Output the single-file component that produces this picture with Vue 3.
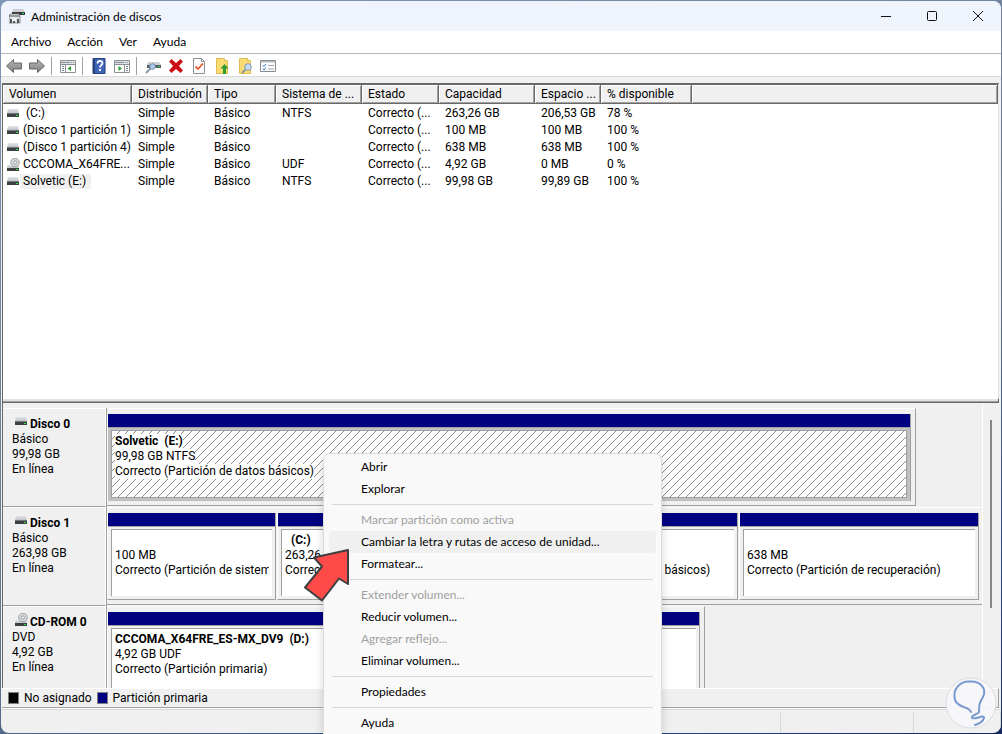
<script setup>
const menus = ['Archivo', 'Acción', 'Ver', 'Ayuda']

const tools = [
  { id: 'back', label: 'Atrás' },
  { id: 'forward', label: 'Adelante' },
  { id: 'sep' },
  { id: 'tree', label: 'Mostrar u ocultar árbol' },
  { id: 'sep' },
  { id: 'help', label: 'Ayuda' },
  { id: 'panel', label: 'Mostrar panel de acciones' },
  { id: 'sep' },
  { id: 'rescan', label: 'Examinar discos' },
  { id: 'delete', label: 'Eliminar' },
  { id: 'check', label: 'Comprobar' },
  { id: 'up', label: 'Abrir carpeta' },
  { id: 'search', label: 'Explorar carpeta' },
  { id: 'props', label: 'Propiedades' }
]

const columns = ['Volumen', 'Distribución', 'Tipo', 'Sistema de ...', 'Estado', 'Capacidad', 'Espacio ...', '% disponible', '']

const volumes = [
  { name: '\u00a0(C:)', fs: 'NTFS', cap: '263,26 GB', free: '206,53 GB', pct: '78 %' },
  { name: '(Disco 1 partición 1)', fs: '', cap: '100 MB', free: '100 MB', pct: '100 %' },
  { name: '(Disco 1 partición 4)', fs: '', cap: '638 MB', free: '638 MB', pct: '100 %' },
  { name: 'CCCOMA_X64FRE...', fs: 'UDF', cap: '4,92 GB', free: '0 MB', pct: '0 %', cd: true },
  { name: 'Solvetic (E:)', fs: 'NTFS', cap: '99,98 GB', free: '99,89 GB', pct: '100 %', selected: true }
]

const disks = [
  {
    name: 'Disco 0', kind: 'Básico', size: '99,98 GB', width: 92.5,
    parts: [{ title: 'Solvetic\u00a0 (E:)', size: '99,98 GB NTFS', status: 'Correcto (Partición de datos básicos)', share: 1, selected: true }]
  },
  {
    name: 'Disco 1', kind: 'Básico', size: '263,98 GB', width: 100,
    parts: [
      { title: '', size: '100 MB', status: 'Correcto (Partición de sistema EFI)', share: 167 },
      { title: '\u00a0 (C:)', size: '263,26 GB NTFS', status: 'Correcto (Arranque, Archivo de paginación, Volcado, Partición de datos básicos)', share: 459 },
      { title: '', size: '638 MB', status: 'Correcto (Partición de recuperación)', share: 238 }
    ]
  },
  {
    name: 'CD-ROM 0', kind: 'DVD', size: '4,92 GB', width: 68.3, cd: true,
    parts: [{ title: 'CCCOMA_X64FRE_ES-MX_DV9\u00a0 (D:)', size: '4,92 GB UDF', status: 'Correcto (Partición primaria)', share: 1 }]
  }
]

const actions = [
  { text: 'Abrir' },
  { text: 'Explorar' },
  { sep: true },
  { text: 'Marcar partición como activa', disabled: true },
  { text: 'Cambiar la letra y rutas de acceso de unidad...', hot: true },
  { text: 'Formatear...' },
  { sep: true },
  { text: 'Extender volumen...', disabled: true },
  { text: 'Reducir volumen...' },
  { text: 'Agregar reflejo...', disabled: true },
  { text: 'Eliminar volumen...' },
  { sep: true },
  { text: 'Propiedades' },
  { sep: true },
  { text: 'Ayuda' }
]
</script>

<template>
  <div class="desktop">
    <svg class="defs" width="0" height="0" aria-hidden="true">
      <defs>
        <linearGradient id="metal" x1="0" y1="0" x2="0" y2="1">
          <stop offset="0" stop-color="#e2e4e7" /><stop offset="1" stop-color="#bfc3c8" />
        </linearGradient>
        <linearGradient id="grayArrow" x1="0" y1="0" x2="0" y2="1">
          <stop offset="0" stop-color="#b9b9b9" /><stop offset="1" stop-color="#7d7d7d" />
        </linearGradient>
        <pattern id="hatch" width="8" height="8" patternUnits="userSpaceOnUse">
          <path d="M0 7h1v1H0zM1 6h1v1H1zM2 5h1v1H2zM3 4h1v1H3zM4 3h1v1H4zM5 2h1v1H5zM6 1h1v1H6zM7 0h1v1H7z" fill="#8c8c8c" />
        </pattern>
        <symbol id="drive" viewBox="0 0 14 14">
          <path d="M2 2h10l1 4H1z" fill="url(#metal)" />
          <path d="M1 6h12v4H1z" fill="#3c4043" />
          <path d="M1 6h12v1H1z" fill="#73777a" />
          <path d="M10 8h2v1h-2z" fill="#2ee84a" />
        </symbol>
        <symbol id="cd" viewBox="0 0 14 14">
          <path d="M1.500 7h11l.5 3H1z" fill="url(#metal)" />
          <path d="M1 10h12v3H1z" fill="#3c4043" />
          <path d="M10 11h2v1h-2z" fill="#2ee84a" />
          <circle cx="9" cy="4.500" r="4.300" fill="#d4d6d8" stroke="#909396" stroke-width=".8" />
          <circle cx="9" cy="4.500" r="1.500" fill="#fff" stroke="#8c8f92" stroke-width=".8" />
        </symbol>
      </defs>
    </svg>

    <main class="window">
      <header class="titlebar">
        <svg class="appicon" viewBox="0 0 16 16" aria-hidden="true">
          <path d="M4 1h10l2 3H3z" fill="#cfd2d5" />
          <path d="M3 4h13v3H3z" fill="#35393c" />
          <path d="M13 5h2v1h-2z" fill="#35e04e" />
          <path d="M1 6h9l1 3v6H0V9z" fill="#e3e3e3" stroke="#77797b" stroke-width=".8" />
          <path d="M0 8h11" stroke="#55585a" />
          <path d="M1 11h2v4H1zM4 11h2v4H4zM8 11h2v4H8z" fill="#55585a" />
          <path d="M3 10h4v3H3z" fill="#f3f3f3" />
        </svg>
        <h1>Administración de discos</h1>
        <button class="sys" aria-label="Minimizar"><svg viewBox="0 0 12 12"><path d="M1 6.500h10" /></svg></button>
        <button class="sys" aria-label="Maximizar"><svg viewBox="0 0 12 12"><rect x="1.500" y="1.500" width="9" height="9" rx="1" /></svg></button>
        <button class="sys" aria-label="Cerrar"><svg viewBox="0 0 12 12"><path d="M1 1l10 10M11 1L1 11" /></svg></button>
      </header>

      <nav class="menubar">
        <button v-for="m in menus" :key="m">{{ m }}</button>
      </nav>

      <div class="toolbar" role="toolbar">
        <template v-for="(t, i) in tools" :key="i">
          <span v-if="t.id === 'sep'" class="tsep"></span>
          <button v-else class="tool" :aria-label="t.label">
            <svg viewBox="0 0 16 16">
              <path v-if="t.id === 'back'" d="M.5 8L7.500 1.500v3.500h8v6h-8v3.500z" fill="url(#grayArrow)" stroke="#666" />
              <path v-else-if="t.id === 'forward'" d="M15.500 8L8.500 1.500v3.500h-8v6h8v3.500z" fill="url(#grayArrow)" stroke="#666" />
              <g v-else-if="t.id === 'tree' || t.id === 'panel'">
                <path d="M.5 2.500h15v12H.5z" fill="#fff" stroke="#8a8f94" />
                <path d="M1 3h14v3H1z" fill="#dfe2e6" />
                <path d="M1 4.500h9M11 4.500h1M13 4.500h1M1 6.500h14" stroke="#8a8f94" />
                <g v-if="t.id === 'tree'">
                  <path d="M5.500 7v7" stroke="#8a8f94" />
                  <path d="M2 8.500h2M2 10.500h2M2 12.500h2" stroke="#6b7f96" />
                  <path d="M11 8v5L7.500 10.500z" fill="#27a22d" />
                </g>
                <g v-else>
                  <path d="M10.500 7v7" stroke="#8a8f94" />
                  <path d="M12 8.500h2M12 10.500h2M12 12.500h2" stroke="#6b7f96" />
                  <path d="M4.500 8v5L8 10.500z" fill="#27a22d" />
                </g>
              </g>
              <g v-else-if="t.id === 'help'">
                <path d="M2 .5h12v15H2z" fill="#3f63b5" stroke="#27407f" />
                <path d="M2 1h2v14H2z" fill="#27407f" />
                <path d="M6.500 5.500c0-3.300 5-3.300 5-.3 0 2-2.500 2-2.500 4.300" fill="none" stroke="#fff" stroke-width="1.800" />
                <path d="M8 11h2v2H8z" fill="#fff" />
              </g>
              <g v-else-if="t.id === 'rescan'">
                <path d="M3 4h11l2 3H2z" fill="#cdd0d3" />
                <path d="M2 7h14v3H2z" fill="#555b60" />
                <path d="M13 8h2v1h-2z" fill="#2fdc48" />
                <path d="M6 10L1 15" stroke="#8494a5" stroke-width="1.800" />
                <circle cx="7.500" cy="8.500" r="2.800" fill="#a9cbe8" stroke="#6e8ba5" />
              </g>
              <path v-else-if="t.id === 'delete'" d="M1 3.500L3.500 1 8 5l4.500-4L15 3.500 11 8l4 4.500-2.500 2.500L8 11l-4.500 4L1 12.500 5 8z" fill="#c90f16" />
              <g v-else-if="t.id === 'check'">
                <path d="M2.500.5h8l3 3v12h-11z" fill="#fdfdfd" stroke="#8d9196" />
                <path d="M10.500.5v3h3" fill="none" stroke="#8d9196" />
                <path d="M4.500 8.500l2.500 2.500 5-5.500" fill="none" stroke="#e8592a" stroke-width="1.800" />
              </g>
              <g v-else-if="t.id === 'up'">
                <path d="M2.500.5h8v2h3v13h-11z" fill="#fbdc72" stroke="#dfbc55" />
                <path d="M10.500 6l4 4.500H12V16H9v-5.500H6.500z" fill="#2e9a32" />
              </g>
              <g v-else-if="t.id === 'search'">
                <path d="M2.500.5h8v2h3v13h-11z" fill="#fbdc72" stroke="#dfbc55" />
                <path d="M8.500 11.500L5 15" stroke="#8494a5" stroke-width="1.800" />
                <circle cx="11" cy="9" r="3.300" fill="#c3dcf1" stroke="#7f9bb5" />
              </g>
              <g v-else>
                <path d="M.5 2.500h15v11H.5z" fill="#fff" stroke="#858b91" />
                <path d="M1 3h14v1.500H1z" fill="#b8bdc2" />
                <path d="M8 7.500h6M8 11h6" stroke="#9aa0a6" />
                <path d="M2.500 7l1.500 1.500L6 6M2.500 10.500L4 12l2-2.500" fill="none" stroke="#2f77c4" />
              </g>
            </svg>
          </button>
        </template>
      </div>

      <section class="list">
        <table>
          <colgroup>
            <col class="w1"><col class="w2"><col class="w3"><col class="w4"><col class="w5"><col class="w6"><col class="w7"><col class="w8"><col>
          </colgroup>
          <thead>
            <tr><th v-for="(c, i) in columns" :key="i" scope="col">{{ c }}</th></tr>
          </thead>
          <tbody>
            <tr v-for="v in volumes" :key="v.name">
              <td class="vol">
                <svg class="mini"><use :href="v.cd ? '#cd' : '#drive'" /></svg><span :class="{ picked: v.selected }">{{ v.name }}</span>
              </td>
              <td>Simple</td>
              <td>Básico</td>
              <td>{{ v.fs }}</td>
              <td>Correcto (...</td>
              <td>{{ v.cap }}</td>
              <td>{{ v.free }}</td>
              <td>{{ v.pct }}</td>
              <td></td>
            </tr>
          </tbody>
        </table>
      </section>

      <section class="graph">
        <div class="rows">
          <article v-for="d in disks" :key="d.name" class="disk">
            <div class="label">
              <h2><svg class="mini"><use :href="d.cd ? '#cd' : '#drive'" /></svg>{{ d.name }}</h2>
              <p>{{ d.kind }}</p>
              <p>{{ d.size }}</p>
              <p>En línea</p>
            </div>
            <div class="track">
              <div class="parts" :class="{ framed: d.width < 100 }" :style="{ width: d.width + '%' }">
                <div v-for="(p, i) in d.parts" :key="i" class="part" :class="{ selected: p.selected }" :style="{ flexGrow: p.share }">
                  <div class="stripe"></div>
                  <div class="frame">
                    <div class="box">
                      <svg v-if="p.selected" class="hatching" aria-hidden="true"><rect width="100%" height="100%" fill="url(#hatch)" shape-rendering="crispEdges" /></svg>
                      <h3><span>{{ p.title }}</span></h3>
                      <p><span>{{ p.size }}</span></p>
                      <p><span>{{ p.status }}</span></p>
                    </div>
                  </div>
                </div>
              </div>
            </div>
          </article>
        </div>
        <div class="scroll"><div class="thumb"></div></div>
      </section>

      <div class="legend">
        <span class="swatch black"></span><span>No asignado</span>
        <span class="swatch navy"></span><span>Partición primaria</span>
      </div>
      <footer class="status"><span></span><span></span><span></span></footer>
    </main>

    <div class="context" role="menu">
      <template v-for="(a, i) in actions" :key="i">
        <hr v-if="a.sep">
        <button v-else role="menuitem" :disabled="a.disabled" :class="{ hot: a.hot }">{{ a.text }}</button>
      </template>
    </div>

    <svg class="pointer" viewBox="0 0 48 56" aria-hidden="true">
      <path d="M46 3L12 10.500l8 9L3 40.500 20 53.500l17-22 9 5.500z" fill="#ff4a4a" stroke="#3f3f3f" stroke-width="2" stroke-linejoin="round" />
    </svg>

    <svg class="badge" viewBox="0 0 52 52" aria-hidden="true">
      <circle cx="26" cy="26" r="25" fill="#f7f8fa" fill-opacity=".93" stroke="#d9dee2" />
      <path d="M26 35C24 29 14 32 10 23C7 11 16 4 25 4.500C36 4 42 12 38 20C34 26 34 29 34 35C32 38 26 38 27 41C30 43 39 37 39 41C38 45 33 47 30 48" fill="none" stroke="#7799cf" stroke-width="2" stroke-linecap="round" />
    </svg>
  </div>
</template>

<style>
body { margin: 0; background: #4a6488; }
</style>

<style scoped>
*, *::before { box-sizing: border-box; }
h1, h2, h3, p { margin: 0; font-size: inherit; font-weight: normal; }
button { font: inherit; color: inherit; background: none; border: 0; padding: 0; }
svg { display: block; }
.defs { position: absolute; }

.desktop {
  position: relative;
  height: 100vh;
  padding: 1px;
  overflow: hidden;
  background: linear-gradient(160deg, #8197b8, #6c7d93 45%, #64758a 60%, #26488e 85%, #16285c);
  font: 12px/15px Roboto, "Open Sans", sans-serif;
  color: #000;
}
.window {
  display: flex;
  flex-direction: column;
  height: 100%;
  border-radius: 8px;
  overflow: hidden;
  background: #f0f0f0;
}

.titlebar { display: flex; align-items: center; flex: 0 0 30px; background: #eff3fb; padding-left: 8px; font-family: Lato, sans-serif; }
.appicon { width: 16px; height: 16px; margin-right: 6px; }
.titlebar h1 { flex: 1; }
.sys { width: 46px; height: 30px; display: grid; place-items: center; }
.sys svg { width: 12px; height: 12px; fill: none; stroke: #111; stroke-width: 1; }

.menubar { display: flex; flex: 0 0 23px; padding: 0 0 2px 10px; gap: 16px; background: #fff; border-bottom: 1px solid #b2b6bd; font-family: Lato, sans-serif; }

.toolbar { display: flex; align-items: center; flex: 0 0 23px; padding: 2px 0 0 1px; background: #fff; border-bottom: 1px solid #d9d9d9; margin-bottom: 6px; }
.tool { width: 23px; height: 20px; display: grid; place-items: center; }
.tool svg { width: 16px; height: 16px; }
.tsep { width: 8px; height: 18px; border-left: 1px solid #a0a0a0; margin-left: 3px; margin-right: -3px; }

.list { flex: 314 1 0; overflow: hidden; background: #fff; margin: 0 2px 0 1px; border: 1px solid #696969; border-top-width: 2px; border-right-color: #e3e3e3; border-bottom: 0; }
table { width: 100%; border-collapse: separate; border-spacing: 0; table-layout: fixed; }
.w1 { width: 129px; } .w2 { width: 76px; } .w3 { width: 68px; } .w4 { width: 86px; }
.w5 { width: 77px; } .w6 { width: 96px; } .w7 { width: 66px; } .w8 { width: 91px; }
th {
  height: 19px; padding: 1px 0 0 6px; text-align: left; font-weight: normal; white-space: nowrap; overflow: hidden;
  background: #f0f0f0; border-bottom: 1px solid #696969; border-right: 1px solid #696969;
  box-shadow: inset 1px 1px 0 #fff, inset -1px -1px 0 #a0a0a0;
}
td { height: 17px; padding: 2px 0 0 6px; line-height: 15px; white-space: nowrap; overflow: hidden; }
.vol { display: flex; align-items: center; padding-left: 3px; }
.mini { width: 14px; height: 14px; flex: none; }
.vol span { padding: 0 5px 0 3px; }
.picked { background: #f0f0f0; }

.graph { display: flex; flex: 291 1 0; min-height: 0; margin: 0 2px 0 1px; overflow: hidden; border-left: 1px solid #696969; position: relative; }
.graph::before {
  content: ""; position: absolute; left: 0; right: 0; top: 0; height: 5px;
  border: 0 solid #696969; border-top: 1px solid #fff; border-bottom-width: 1px; border-right-width: 1px; background: #e3e3e3;
  box-shadow: inset 0 -1px 0 #a0a0a0;
}
.rows { flex: 1; min-width: 0; padding-top: 10px; border-right: 1px solid #fff; }
.disk { display: flex; height: 99px; }
.label { flex: 0 0 103px; padding: 8px 0 0 9px; border: 1px solid #fff; border-left: 0; border-bottom-color: #a0a0a0; }
.label h2, .part h3 { font-weight: bold; }
.label h2 { display: flex; white-space: nowrap; }
.label .mini { margin: -2px 2px 0 2px; }
.track { flex: 1; min-width: 0; border-left: 1px solid #a0a0a0; padding-bottom: 1px; }
.parts { display: flex; height: 98px; padding: 5px 2px 4px 0; border-top: 1px solid #fff; border-bottom: 1px solid #a0a0a0; }
.parts.framed { border-right: 1px solid #a0a0a0; padding-right: 3px; }
.part { flex: 1 1 0; min-width: 0; display: flex; flex-direction: column; border-right: 1px solid #a0a0a0; border-left: 1px solid #fff; margin-right: 1px; }
.parts:not(.framed) .part { border-bottom: 1px solid #a0a0a0; }
.stripe { height: 13px; background: #000080; }
.frame { flex: 1; min-height: 0; border-top: 1px solid #a0a0a0; padding: 2px 3px 3px; }
.selected .frame { background: #c0c0c0; }
.box { position: relative; height: 100%; padding: 3px 3px 0; overflow: hidden; background: #fff; border-left: 1px solid #a0a0a0; border-top: 1px solid #a0a0a0; white-space: nowrap; }
.selected .box { border: 1px solid #a0a0a0; }
.hatching { position: absolute; inset: 0; width: 100%; height: 100%; }
.box h3, .box p { position: relative; height: 15px; overflow: hidden; }
.box span { display: inline-block; background: #fff; }
.scroll { flex: 0 0 16px; padding: 22px 0 0 7px; }
.thumb { width: 2px; height: 188px; background: #858585; }

.legend { display: flex; align-items: center; flex: 0 0 20px; margin: 0 2px 0 1px; padding-left: 6px; border-top: 1px solid #fff; border-bottom: 1px solid #a0a0a0; border-right: 1px solid #a0a0a0; }
.swatch { width: 11px; height: 12px; margin-right: 5px; border: 1px solid #808080; }
.black { background: #000; }
.navy { background: #000080; margin-left: 5px; }
.status { display: flex; flex: 0 0 25px; border-top: 1px solid #fff; box-shadow: inset 0 1px 0 #d8d8d8; padding-top: 3px; }
.status span { flex: 0 0 133px; border-right: 1px solid #d8d8d8; }
.status span:first-child { flex: 1; }
.status span:last-child { flex: 0 0 87px; }

.context {
  position: absolute; left: 323px; top: 453px; width: 339px; padding: 2px 5px 6px;
  background: #f9f9f9; border: 1px solid #dcdcdc; border-radius: 7px; box-shadow: 0 4px 10px rgb(0 0 0 / 16%);
  font-family: Lato, sans-serif;
}
.context button { display: block; width: 100%; height: 22px; padding: 0 0 2px 32px; text-align: left; border-radius: 4px; white-space: nowrap; }
.context button:disabled { color: #a0a0a0; }
.context .hot { background: #f0f0f0; }
.context hr { height: 1px; margin: 4px 3px; border: 0; background: #d7d7d7; }

.pointer { position: absolute; left: 302px; top: 547px; width: 48px; height: 56px; }
.badge { position: absolute; right: 5px; bottom: 5px; width: 52px; height: 52px; }
</style>
